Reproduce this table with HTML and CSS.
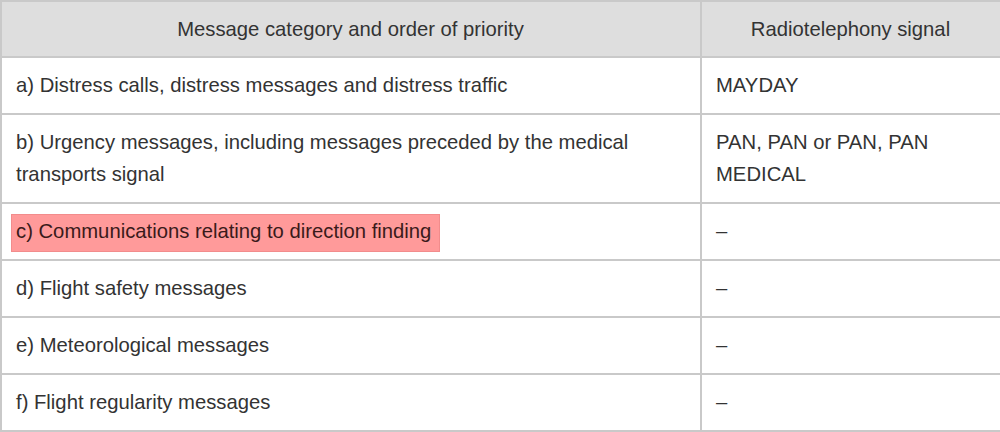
FILE: index.html
```html
<!DOCTYPE html>
<html>
<head>
<meta charset="utf-8">
<link rel="stylesheet" href="styles.css">
</head>
<body>
<table class="prio">
  <colgroup><col class="c1"><col class="c2"></colgroup>
  <thead>
    <tr><th>Message category and order of priority</th><th>Radiotelephony signal</th></tr>
  </thead>
  <tbody>
    <tr><td>a) Distress calls, distress messages and distress traffic</td><td>MAYDAY</td></tr>
    <tr><td>b) Urgency messages, including messages preceded by the medical transports signal</td><td>PAN, PAN or PAN, PAN MEDICAL</td></tr>
    <tr><td><mark class="hl">c) Communications relating to direction finding</mark></td><td>–</td></tr>
    <tr><td>d) Flight safety messages</td><td>–</td></tr>
    <tr><td>e) Meteorological messages</td><td>–</td></tr>
    <tr><td>f) Flight regularity messages</td><td>–</td></tr>
  </tbody>
</table>
</body>
</html>
```

FILE: styles.css
```css
html, body {
  margin: 0;
  padding: 0;
  background: #ffffff;
}
body {
  font-family: "Liberation Sans", Arial, sans-serif;
  font-size: 20.25px;
  color: #333333;
}
.prio {
  width: 1000px;
  border-collapse: collapse;
  table-layout: fixed;
}
.c1 { width: 700px; }
.c2 { width: 300px; }
.prio th, .prio td {
  border: 2px solid #c9c9c9;
  padding: 11px 15px 12px 14px;
  line-height: 32px;
  text-align: left;
  vertical-align: top;
  font-weight: normal;
}
.prio th {
  background: #dedede;
  text-align: center;
  padding-bottom: 11px;
}
.hl {
  background: #ff9a9a;
  color: #3a1a1a;
  margin-left: -5px;
  padding: 6px 9px 10px 5px;
  box-shadow: inset 0 0 0 1px #f28c8c;
}
```
